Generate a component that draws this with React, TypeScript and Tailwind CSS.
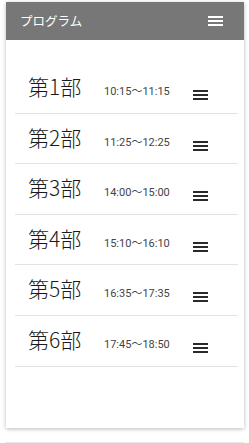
import React from "react";

const rows = [
  { name: "第1部", time: "10:15〜11:15" },
  { name: "第2部", time: "11:25〜12:25" },
  { name: "第3部", time: "14:00〜15:00" },
  { name: "第4部", time: "15:10〜16:10" },
  { name: "第5部", time: "16:35〜17:35" },
  { name: "第6部", time: "17:45〜18:50" },
];

const font = { fontFamily: '"Noto Sans CJK JP", "Noto Sans", sans-serif' };

export default function App() {
  return (
    <div className="w-[249px] h-[443px] bg-white overflow-hidden" style={font}>
      <div className="pt-[2px] pl-[6px] pr-[5px]">
        <div className="h-[426px] bg-white shadow-[0_1px_4px_rgba(0,0,0,0.28)] flex flex-col">
          <div className="h-[38px] bg-[#777777] flex items-center justify-between pl-[14px] pr-[21px]">
            <span className="text-white text-[12.5px] leading-none">プログラム</span>
            <div className="flex flex-col gap-[2px]">
              <div className="w-[15px] h-[2px] bg-white" />
              <div className="w-[15px] h-[2px] bg-white" />
              <div className="w-[15px] h-[2px] bg-white" />
            </div>
          </div>
          <div className="pt-[23px] pl-[9px] pr-[6px]">
            {rows.map((r) => (
              <div
                key={r.name}
                className="h-[50.6px] border-b border-[#e2e2e2] flex items-start pl-[13px]"
              >
                <span className="mt-[13px] text-[21px] leading-none font-light text-[#1a1a1a] w-[54px] whitespace-nowrap">
                  {r.name}
                </span>
                <span
                  className="mt-[23px] ml-[22px] text-[11px] leading-none text-[#444] w-[89px] whitespace-nowrap"
                  style={{ fontFamily: 'Roboto, "Noto Sans CJK JP", sans-serif' }}
                >
                  {r.time}
                </span>
                <div className="mt-[27px] flex flex-col gap-[2px]">
                  <div className="w-[15px] h-[2px] bg-[#2a2a2a]" />
                  <div className="w-[15px] h-[2px] bg-[#2a2a2a]" />
                  <div className="w-[15px] h-[2px] bg-[#2a2a2a]" />
                </div>
              </div>
            ))}
          </div>
        </div>
      </div>
      <div className="mt-[14px] mx-[5px] border-t border-[#e6e6e6]" />
    </div>
  );
}
